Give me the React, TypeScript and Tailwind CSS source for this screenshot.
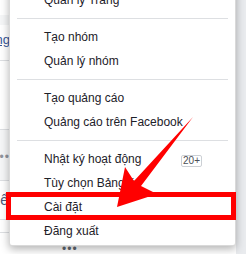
import React from 'react'

const font = { fontFamily: '"Liberation Sans", Arial, sans-serif' }

function MenuRow({ label, badge }: { label: string; badge?: string }) {
  return (
    <div className="flex h-[24px] items-center justify-between pl-[34px] pr-[33px] text-[12px] leading-[24px] text-[#1d2129] whitespace-nowrap">
      <span>{label}</span>
      {badge && (
        <span className="mt-[3px] flex h-[12px] items-center rounded-[2px] border border-[#ccd0d5] px-[1px] text-[10px] leading-[10px] text-[#4b4f56]">
          {badge}
        </span>
      )}
    </div>
  )
}

function Separator() {
  return (
    <div className="py-[6px]">
      <div className="mx-[7px] h-px bg-[#dddfe2]" />
    </div>
  )
}

export default function App() {
  return (
    <div className="relative flex h-[254px] w-[246px] overflow-hidden bg-white" style={font}>
      {/* page behind the menu */}
      <div className="flex w-[9px] flex-col">
        <div className="h-[15px]" />
        <div className="h-[10px] bg-[#f5f6f7]" />
        <div className="flex h-[36px] justify-end overflow-hidden border-b border-[#dddfe2] pt-[7px]">
          <span className="mr-[-1px] whitespace-nowrap text-[13px] leading-[16px] text-[#365899] underline">
            Trang
          </span>
        </div>
        <div className="h-[69px] border-b border-[#dddfe2]" />
        <div className="flex h-[51px] items-center justify-end overflow-hidden border-b border-[#dddfe2] bg-[#f5f6f7]">
          <span className="mt-[3px] mr-[-1px] text-[12px] tracking-[1px] text-[#90949c]">•••</span>
        </div>
        <div className="flex h-[39px] items-center justify-end overflow-hidden border-b border-[#dddfe2]">
          <span className="mr-[1px] whitespace-nowrap text-[14px] text-[#4b5a7a]">thể</span>
        </div>
        <div className="h-[13px] border-b border-[#dddfe2]" />
      </div>
      <div className="flex flex-1 flex-col justify-end pl-[53px]">
        <span className="text-[12px] leading-[9px] tracking-[1px] text-[#606770]">•••</span>
      </div>
      <div className="w-[10px] bg-[#e9ebee]" />

      {/* dropdown menu */}
      <div className="absolute left-[9px] top-[-13px] w-[227px] rounded-[3px] border border-black/15 bg-white pb-[2px] shadow-[0_3px_8px_rgba(0,0,0,0.3)]">
        <MenuRow label="Quản lý Trang" />
        <Separator />
        <MenuRow label="Tạo nhóm" />
        <MenuRow label="Quản lý nhóm" />
        <Separator />
        <MenuRow label="Tạo quảng cáo" />
        <MenuRow label="Quảng cáo trên Facebook" />
        <Separator />
        <MenuRow label="Nhật ký hoạt động" badge="20+" />
        <MenuRow label="Tùy chọn Bảng tin" />
        <MenuRow label="Cài đặt" />
        <MenuRow label="Đăng xuất" />
      </div>

      {/* annotation */}
      <div className="absolute left-[6px] top-[192px] h-[28px] w-[230px] border-[5px] border-[#ff0000]" />
      <svg className="pointer-events-none absolute left-0 top-0" width="246" height="254" viewBox="0 0 246 254">
        <polygon points="117,207 125,167 134,181 193,117 141,186 157,194" fill="#ff0000" />
      </svg>
    </div>
  )
}
